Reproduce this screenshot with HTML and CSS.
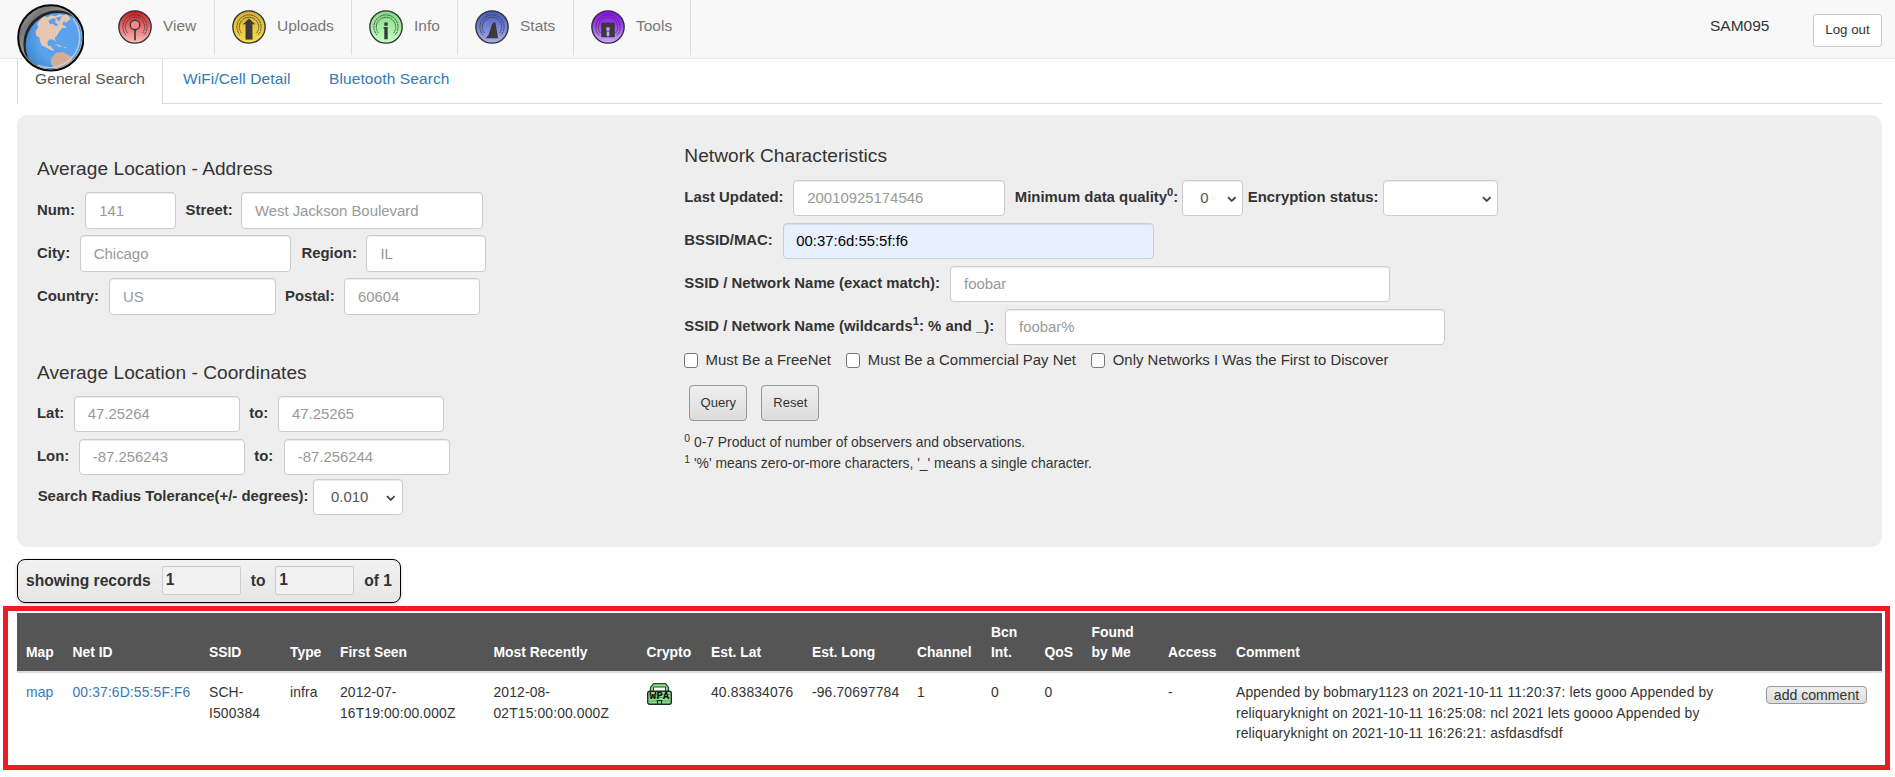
FILE: index.html
```html
<!DOCTYPE html>
<html lang="en">
<head>
<meta charset="utf-8">
<title>Network Search</title>
<link rel="stylesheet" href="styles.css">
</head>
<body>
<svg class="defs" width="0" height="0" aria-hidden="true">
  <defs>
    <linearGradient id="gRed" x1="0" y1="0" x2="0" y2="1"><stop offset="0" stop-color="#c9191c"/><stop offset=".55" stop-color="#e9777a"/><stop offset="1" stop-color="#ffbcbc"/></linearGradient>
    <linearGradient id="gYellow" x1="0" y1="0" x2="0" y2="1"><stop offset="0" stop-color="#d6af30"/><stop offset="1" stop-color="#f6df4e"/></linearGradient>
    <linearGradient id="gGreen" x1="0" y1="0" x2="0" y2="1"><stop offset="0" stop-color="#82dc82"/><stop offset="1" stop-color="#c4ffc4"/></linearGradient>
    <linearGradient id="gBlue" x1="0" y1="0" x2="0" y2="1"><stop offset="0" stop-color="#4256bd"/><stop offset="1" stop-color="#a9aff0"/></linearGradient>
    <linearGradient id="gPurple" x1="0" y1="0" x2="0" y2="1"><stop offset="0" stop-color="#8a0cf5"/><stop offset=".4" stop-color="#9a36f0"/><stop offset="1" stop-color="#c9aef5"/></linearGradient>
    <g id="waves" fill="none" stroke="#3a3a3a">
      <path d="M-26 24A35.500 35.500 0 1 1 26 24" stroke-width="2.600" stroke-dasharray="6 2"/>
      <path d="M-22 18A28.500 28.500 0 1 1 22 18" stroke-width="2.600" stroke-dasharray="5 1.500"/>
    </g>
  </defs>
</svg>

<header class="topbar">
  <a class="logo" href="#" aria-label="Home">
    <svg viewBox="50 13 203 203">
      <defs>
        <linearGradient id="rim" x1="0" y1="0" x2="1" y2="1"><stop offset="0" stop-color="#c4c4c4"/><stop offset=".22" stop-color="#777"/><stop offset=".5" stop-color="#aaa"/><stop offset="1" stop-color="#d8d8d8"/></linearGradient>
        <radialGradient id="sea" cx=".55" cy=".4" r=".6"><stop offset=".6" stop-color="#5ba2ee"/><stop offset="1" stop-color="#4085cd"/></radialGradient>
        <clipPath id="disc"><circle cx="151.500" cy="115" r="92"/></clipPath>
      </defs>
      <circle cx="151.500" cy="114.500" r="98" fill="url(#rim)" stroke="#080808" stroke-width="6"/>
      <g clip-path="url(#disc)">
        <circle cx="170" cy="133" r="101" fill="#242424"/>
        <circle cx="173" cy="137" r="97" fill="url(#sea)"/>
        <path fill="#e7c6b2" d="M110 72L124 55L132 50L142 53L151 47L165 50L178 44L190 47L199 43L211 58L196 69L191 64L185 74L194 78L198 85L187 84L178 94L169 109L163 115L167 126L160 120L148 119L141 127L143 138L152 139L155 146L163 151L155 153L140 145L124 137L119 125L117 113L108 108L106 95L114 82Z"/>
        <path fill="#5ba2ee" d="M144 63l15-8 8 4-3 9 10 8-7 4-10-8-8 2zM167 54l18-5-9 17z"/>
        <path fill="#e7c6b2" d="M162 133l15 3 10 7-12-3zM189 141l11 3-8 2z"/>
        <path fill="#d4ad96" d="M153 176L166 160L187 157L199 163L216 173L215 185L200 198L179 208L162 208L151 190Z"/>
      </g>
      <path d="M218 57A90 90 0 0 1 112 196" fill="none" stroke="#d5dde5" stroke-width="4" opacity=".75"/>
    </svg>
  </a>
  <nav class="menu">
    <a class="item view" href="#"><svg viewBox="-50 -50 100 100"><circle r="47.500" fill="url(#gRed)" stroke="#333" stroke-width="4"/><use href="#waves"/><circle cy="-6" r="14" fill="#ed8b8d" stroke="#3a3a3a" stroke-width="4"/><path d="M0 8V39" stroke="#3a3a3a" stroke-width="5"/></svg>View</a>
    <a class="item uploads" href="#"><svg viewBox="-50 -50 100 100"><circle r="47.500" fill="url(#gYellow)" stroke="#333" stroke-width="4"/><use href="#waves"/><path d="M0-25L18-8H10V37H-10V-8H-18Z" fill="#3a3a3a" stroke="#dfbd3c" stroke-width="3" paint-order="stroke"/></svg>Uploads</a>
    <a class="item info" href="#"><svg viewBox="-50 -50 100 100"><circle r="47.500" fill="url(#gGreen)" stroke="#333" stroke-width="4"/><use href="#waves"/><path d="M-5-13H5V-4H-5ZM-7 0H5V36H-5V5H-7Z" fill="#3a3a3a"/></svg>Info</a>
    <a class="item stats" href="#"><svg viewBox="-50 -50 100 100"><circle r="47.500" fill="url(#gBlue)" stroke="#333" stroke-width="4"/><use href="#waves"/><path d="M-19 33L-10 23L0-8L4-13H10L18 33Z" fill="#3a3a3a"/></svg>Stats</a>
    <a class="item tools" href="#"><svg viewBox="-50 -50 100 100"><circle r="47.500" fill="url(#gPurple)" stroke="#333" stroke-width="4"/><use href="#waves"/><path d="M-20-13H20V30H-20Z" fill="#3a3a3a"/><circle cy="6" r="6" fill="#c48cf5"/><path d="M-4 13H4V27H-4Z" fill="#c8a4f5"/></svg>Tools</a>
  </nav>
  <span class="user">SAM095</span>
  <button class="logout">Log out</button>
</header>

<div class="tabs">
  <a class="tab active" href="#">General Search</a>
  <a class="tab wifi" href="#">WiFi/Cell Detail</a>
  <a class="tab" href="#">Bluetooth Search</a>
</div>

<main class="content">
  <form class="panel">
    <section class="left">
      <h4>Average Location - Address</h4>
      <div class="row num"><label>Num:</label><input placeholder="141"><label>Street:</label><input placeholder="West Jackson Boulevard"></div>
      <div class="row city"><label>City:</label><input placeholder="Chicago"><label>Region:</label><input placeholder="IL"></div>
      <div class="row country"><label>Country:</label><input placeholder="US"><label>Postal:</label><input placeholder="60604"></div>
      <h4 class="coords">Average Location - Coordinates</h4>
      <div class="row short lat"><label>Lat:</label><input placeholder="47.25264"><label>to:</label><input placeholder="47.25265"></div>
      <div class="row short lon"><label>Lon:</label><input placeholder="-87.256243"><label>to:</label><input placeholder="-87.256244"></div>
      <div class="row short radius"><label>Search Radius Tolerance(+/- degrees):</label><div class="pick"><select><option>0.010</option></select><svg viewBox="0 0 10 6"><path d="M1 1l4 4 4-4"/></svg></div></div>
    </section>
    <section class="right">
      <h4>Network Characteristics</h4>
      <div class="row short updated"><label>Last Updated:</label><input placeholder="20010925174546"><label>Minimum data quality<sup>0</sup>:</label><div class="pick quality"><select><option>0</option></select><svg viewBox="0 0 10 6"><path d="M1 1l4 4 4-4"/></svg></div><label>Encryption status:</label><div class="pick"><select><option></option></select><svg viewBox="0 0 10 6"><path d="M1 1l4 4 4-4"/></svg></div></div>
      <div class="row short bssid"><label>BSSID/MAC:</label><input class="filled" value="00:37:6d:55:5f:f6"></div>
      <div class="row short exact"><label>SSID / Network Name (exact match):</label><input placeholder="foobar"></div>
      <div class="row short wild"><label>SSID / Network Name (wildcards<sup>1</sup>: % and _):</label><input placeholder="foobar%"></div>
      <div class="checks"><input type="checkbox"><span>Must Be a FreeNet</span><input type="checkbox"><span>Must Be a Commercial Pay Net</span><input type="checkbox"><span>Only Networks I Was the First to Discover</span></div>
      <div class="actions"><button type="button" class="query">Query</button><button type="button" class="reset">Reset</button></div>
      <p class="note"><sup>0</sup> 0-7 Product of number of observers and observations.</p>
      <p class="note"><sup>1</sup> '%' means zero-or-more characters, '_' means a single character.</p>
    </section>
  </form>

  <div class="records"><span>showing records</span><input value="1"><span>to</span><input value="1"><span>of 1</span></div>

  <div class="results">
    <table>
      <colgroup><col class="c-map"><col class="c-net"><col class="c-ssid"><col class="c-type"><col class="c-first"><col class="c-recent"><col class="c-crypto"><col class="c-lat"><col class="c-long"><col class="c-channel"><col class="c-bcn"><col class="c-qos"><col class="c-found"><col class="c-access"><col class="c-comment"><col></colgroup>
      <thead><tr><th>Map</th><th>Net ID</th><th>SSID</th><th>Type</th><th>First Seen</th><th>Most Recently</th><th>Crypto</th><th>Est. Lat</th><th>Est. Long</th><th>Channel</th><th>Bcn<br>Int.</th><th>QoS</th><th>Found<br>by Me</th><th>Access</th><th>Comment</th><th></th></tr></thead>
      <tbody><tr>
        <td><a href="#">map</a></td><td><a href="#">00:37:6D:55:5F:F6</a></td><td>SCH-<br>I500384</td><td>infra</td><td>2012-07-<br>16T19:00:00.000Z</td><td>2012-08-<br>02T15:00:00.000Z</td>
        <td><svg class="lock" viewBox="0 0 25 22"><path d="M3.500 9V4.500L6.500 .7H18.500L21.500 4.500V9" fill="#8edc8e" stroke="#2d4a2d" stroke-width="1.300"/><rect x="6.500" y="4" width="12" height="4.500" fill="#fff" stroke="#2d4a2d"/><rect x=".7" y="8.300" width="23.600" height="13" rx="2" fill="#8fe08f" stroke="#1f2f1f" stroke-width="1.400"/><path d="M1.500 11.500H23.500M1.500 14.500H23.500M1.500 18H23.500" stroke="#4f9a4f" stroke-width=".8"/><path d="M10.500 21V17.500M14.500 21V17.500M9.500 17.500H15.500" stroke="#16301a" stroke-width="1.200"/><text x="2.500" y="16.400" textLength="20" lengthAdjust="spacingAndGlyphs">WPA</text></svg></td>
        <td>40.83834076</td><td>-96.70697784</td><td>1</td><td>0</td><td>0</td><td></td><td>-</td>
        <td>Appended by bobmary1123 on 2021-10-11 11:20:37: lets gooo Appended by<br>reliquaryknight on 2021-10-11 16:25:08: ncl 2021 lets goooo Appended by<br>reliquaryknight on 2021-10-11 16:26:21: asfdasdfsdf</td>
        <td><button class="add">add comment</button></td>
      </tr></tbody>
    </table>
  </div>
</main>
</body>
</html>
```
FILE: styles.css
```css
* { box-sizing: border-box; }
body {
  margin: 0;
  height: 777px;
  overflow: hidden;
  background: #fff;
  color: #333;
  font-family: "Liberation Sans", Arial, sans-serif;
  font-size: 14.9px;
}
a { color: #337ab7; text-decoration: none; }
button, input, select { font-family: inherit; margin: 0; color: #333; }
.defs { display: block; position: absolute; }

.topbar {
  position: relative;
  display: flex;
  height: 59px;
  padding-left: 99px;
  background: #f8f8f8;
  border-bottom: 1px solid #e7e7e7;
  font-size: 15.5px;
}
.logo { position: absolute; left: 16.7px; top: 4.3px; width: 67.7px; height: 67.7px; z-index: 2; }
.logo svg { display: block; width: 100%; height: 100%; }
.menu { display: flex; height: 55px; }
.item {
  display: flex;
  gap: 11px;
  padding-left: 17px;
  border-right: 1px solid #ddd;
  color: #777;
  line-height: 51px;
}
.item svg { width: 34px; height: 34px; margin-top: 9.7px; flex: none; }
.view { width: 116px; padding-left: 19px; }
.uploads { width: 137px; }
.info { width: 106px; }
.stats { width: 116px; }
.tools { width: 117px; }
.user { margin-left: auto; width: 103px; line-height: 52px; }
.logout {
  width: 69px;
  height: 33px;
  margin: 14px 13px 0 0;
  padding: 0 0 3px;
  background: #fff;
  border: 1px solid #ccc;
  border-radius: 3px;
  font-size: 13.3px;
}

.tabs {
  display: flex;
  height: 45px;
  margin: 0 13px 0 17px;
  border-bottom: 1px solid #ddd;
  font-size: 15.5px;
  letter-spacing: .1px;
}
.tab { padding-left: 17px; line-height: 40px; }
.tab.active { width: 146px; height: 45px; background: #fff; border: 1px solid #ddd; border-top: 0; border-bottom: 0; color: #555; }
.tab.wifi { width: 149px; padding-left: 20px; }

.content { padding: 11px 13px 0 17px; }
.panel {
  display: flex;
  height: 432px;
  background: #eee;
  border-radius: 11px;
}
.left { width: 667.3px; padding: 42px 0 0 20px; }
.right { padding-top: 29px; }
h4 { margin: 0; font-weight: 400; font-size: 19.1px; line-height: 24px; letter-spacing: .05px; }
.left h4 { margin-bottom: 11px; }
.left h4.coords { margin: 40px 0 11px; }
.right h4 { margin-bottom: 12px; }

.row { display: grid; height: 43px; white-space: nowrap; }
.row label { font-weight: 700; line-height: 36px; }
.row.short label { line-height: 35px; }
.row sup, .note sup { position: relative; top: -.5em; vertical-align: baseline; font-size: 75%; line-height: 0; }
.row input, .row select {
  width: 100%;
  height: 37px;
  padding: 0 13px;
  background: #fff;
  border: 1px solid #ccc;
  border-radius: 4px;
  box-shadow: inset 0 1px 1px rgba(0, 0, 0, .075);
  color: #555;
  font-size: 14.9px;
}
.row.short input, .row.short select { height: 36px; }
.row input::placeholder { color: #999; opacity: 1; }
.row input.filled { background: #e8f0fe; color: #000; padding-left: 12.500px; }
.row select { appearance: none; padding-left: 17px; }
.pick { position: relative; }
.pick svg {
  position: absolute;
  right: 7px;
  top: 15.500px;
  width: 9.500px;
  height: 6px;
  fill: none;
  stroke: #444;
  stroke-width: 1.900;
}
.row.num { grid-template-columns: 48.300px 100.300px 55.300px 242.600px; }
.row.num input:first-of-type { width: 90.500px; }
.row.city { grid-template-columns: 42.800px 221.700px 65px 120px; }
.row.city input:first-of-type { width: 211.500px; }
.row.country { grid-template-columns: 72px 176px 59px 136px; }
.row.country input:first-of-type { width: 166.500px; }
.row.lat { grid-template-columns: 36.800px 175.500px 28.700px 166px; }
.row.lon { grid-template-columns: 41.800px 175.500px 29.500px 166px; }
.row.lat input, .row.lon input { width: 166px; }
.row.radius { grid-template-columns: 275.300px 90px; height: 36px; margin: -3px 0 0 .700px; }
.row.updated { grid-template-columns: 109px 221.500px 167.500px 65.500px 135.500px 115px; }
.row.updated input { width: 211.500px; }
.pick.quality { width: 61px; }
.row.bssid { grid-template-columns: 98.500px 371.500px; }
.row.exact { grid-template-columns: 265.800px 440px; }
.row.wild { grid-template-columns: 320.800px 440px; }

.checks { display: flex; height: 14px; margin-top: 1px; line-height: 14px; white-space: nowrap; }
.checks input {
  appearance: none;
  width: 14.500px;
  height: 15px;
  margin: 0 7.300px 0 -.500px;
  background: #fff;
  border: 1px solid #767676;
  border-radius: 3px;
}
.checks span { margin-right: 15.500px; letter-spacing: .020px; }
.actions { display: flex; gap: 14px; margin: 18px 0 0 5px; }
.actions button, .add {
  background: linear-gradient(#efefef, #dcdcdc);
  border: 1px solid #999;
  border-radius: 4px;
}
.actions button { width: 58px; height: 36px; padding: 0 0 1px; font-size: 13px; }
.note { margin: 0; font-size: 13.860px; line-height: 21px; }
.actions + .note { margin-top: 11px; }

.records {
  display: flex;
  width: 384px;
  height: 44px;
  margin-top: 12px;
  padding: 6px 0 0 8px;
  background: linear-gradient(#f2f2f2, #e6e6e6);
  border: 1px solid #000;
  border-radius: 8px;
  box-shadow: 0 1px 3px rgba(0, 0, 0, .25);
  font-size: 15.600px;
  font-weight: 700;
  line-height: 30px;
  white-space: nowrap;
}
.records input {
  width: 79px;
  height: 29px;
  margin: 0 10px 0 11px;
  padding: 0 3px 1px;
  background: #f2f2f2;
  border: 1px solid #ccc;
  border-radius: 2px;
  font-size: 15.600px;
  font-weight: 700;
}
.records span:nth-of-type(2) { width: 13.500px; }

.results {
  width: 1887px;
  height: 164px;
  margin: 3px 0 0 -14px;
  padding: 2px 0 0 9px;
  border: 5px solid #ed1c24;
}
table { width: 1865px; table-layout: fixed; border-collapse: separate; border-spacing: 0; font-size: 13.860px; line-height: 20.500px; }
th, td { padding: 9px 0 0 9px; text-align: left; vertical-align: top; white-space: nowrap; }
td { letter-spacing: .140px; }
th { height: 60px; padding: 9px 0 9px 9px; line-height: 20px; background: #555; border-bottom: 2px solid #ddd; color: #fff; vertical-align: bottom; }
.c-map { width: 46.500px; }
.c-net { width: 136.500px; }
.c-ssid { width: 81px; }
.c-type { width: 50px; }
.c-first { width: 153.500px; }
.c-recent { width: 153px; }
.c-crypto { width: 64.500px; }
.c-lat { width: 101px; }
.c-long { width: 105px; }
.c-channel { width: 74px; }
.c-bcn { width: 53.500px; }
.c-qos { width: 47px; }
.c-found { width: 76.500px; }
.c-access { width: 68px; }
.c-comment { width: 530px; }
.lock { display: block; width: 25px; height: 22px; margin-top: 1px; }
.lock text { font: 700 8px "DejaVu Sans Mono", monospace; letter-spacing: 0; fill: #111; }
.add { display: block; width: 101px; height: 18px; margin-top: 4px; padding: 0 0 1px; font-size: 14.100px; line-height: 14px; }
```
